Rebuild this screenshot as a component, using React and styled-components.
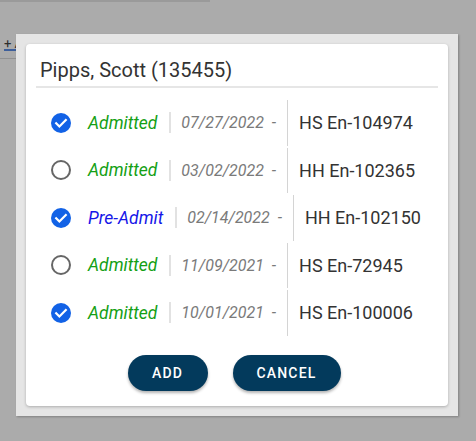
import styled, { createGlobalStyle } from "styled-components";

const GlobalStyle = createGlobalStyle`
  html, body {
    margin: 0;
    padding: 0;
    background: #ffffff;
    font-family: Roboto, "Liberation Sans", Arial, sans-serif;
  }
`;

const Page = styled.div`
  width: 476px;
  height: 441px;
  overflow: hidden;
  position: relative;
  background: #ffffff;
`;

const TopRule = styled.div`
  width: 210px;
  height: 2px;
  background: #e6e6e6;
`;

const AddLink = styled.a`
  display: inline-block;
  margin: 34px 0 0 4px;
  font-size: 13px;
  color: #444;
  text-decoration: underline;
  text-decoration-color: #5c8ee8;
  text-decoration-thickness: 2px;
  white-space: nowrap;
`;

const PageRule = styled.div`
  margin-top: 6px;
  height: 1px;
  width: 300px;
  background: #d8d8d8;
`;

const Backdrop = styled.div`
  position: absolute;
  inset: 0;
  background: rgba(0, 0, 0, 0.33);
`;

const Frame = styled.div`
  position: absolute;
  left: 16px;
  top: 34px;
  width: 442px;
  height: 382px;
  box-sizing: border-box;
  padding: 10px;
  background: #e5e5e5;
  box-shadow: 1px 1px 2px rgba(0, 0, 0, 0.25);
`;

const Card = styled.div`
  height: 100%;
  box-sizing: border-box;
  background: #fff;
  border-radius: 4px;
  box-shadow: 0 1px 3px rgba(0, 0, 0, 0.25);
  padding: 14px 10px 15px;
  display: flex;
  flex-direction: column;
`;

const Title = styled.h2`
  margin: 0;
  padding: 0 4px 4px;
  font-size: 20px;
  font-weight: 400;
  line-height: 24px;
  color: #333;
  border-bottom: 2px solid #e6e6e6;
`;

const List = styled.div`
  margin-top: 11px;
  display: flex;
  flex-direction: column;
`;

const Row = styled.div`
  height: 47.5px;
  display: flex;
  align-items: center;
`;

const Check = styled.span`
  width: 24px;
  height: 24px;
  margin: 0 15px 0 13px;
  display: flex;
  svg {
    width: 24px;
    height: 24px;
  }
`;

const Status = styled.span`
  font-style: italic;
  font-size: 17.5px;
  color: ${(p) => (p.pre ? "#1616e8" : "#14a014")};
  padding-right: 12px;
`;

const DateCell = styled.span`
  font-style: italic;
  font-size: 16px;
  line-height: 21px;
  color: #7a7a7a;
  border-left: 2px solid #e2e2e2;
  padding: 0 11px 0 10px;
`;

const Entity = styled.span`
  align-self: stretch;
  margin: 1px 0;
  display: flex;
  align-items: center;
  padding-left: 11px;
  border-left: 1px solid #d4d4d4;
  font-size: 18px;
  color: #333;
`;

const Actions = styled.div`
  margin-top: auto;
  display: flex;
  justify-content: center;
  gap: 25px;
  padding-right: 6px;
`;

const Button = styled.button`
  height: 36px;
  min-width: ${(p) => p.w}px;
  border: none;
  border-radius: 18px;
  background: #033a5c;
  color: #fff;
  font-family: Roboto, "Liberation Sans", Arial, sans-serif;
  font-size: 14px;
  font-weight: 500;
  letter-spacing: 1.2px;
  box-shadow: 0 2px 3px rgba(0, 0, 0, 0.3);
  cursor: pointer;
`;

const CheckedIcon = () => (
  <svg viewBox="0 0 24 24">
    <circle cx="12" cy="12" r="10" fill="#1262e6" />
    <path
      d="M7.2 12.3l3.2 3.2 6.4-6.4"
      fill="none"
      stroke="#fff"
      strokeWidth="2.2"
      strokeLinecap="square"
    />
  </svg>
);

const EmptyIcon = () => (
  <svg viewBox="0 0 24 24">
    <circle cx="12" cy="12" r="9" fill="none" stroke="#666" strokeWidth="2" />
  </svg>
);

const rows = [
  { on: true, status: "Admitted", date: "07/27/2022", id: "HS En-104974" },
  { on: false, status: "Admitted", date: "03/02/2022", id: "HH En-102365" },
  { on: true, status: "Pre-Admit", date: "02/14/2022", id: "HH En-102150" },
  { on: false, status: "Admitted", date: "11/09/2021", id: "HS En-72945" },
  { on: true, status: "Admitted", date: "10/01/2021", id: "HS En-100006" },
];

export default function App() {
  return (
    <>
      <GlobalStyle />
      <Page>
        <TopRule />
        <AddLink>+ Add Encounter</AddLink>
        <PageRule />
        <Backdrop />
        <Frame>
          <Card>
            <Title>Pipps, Scott (135455)</Title>
            <List>
              {rows.map((r) => (
                <Row key={r.id}>
                  <Check>{r.on ? <CheckedIcon /> : <EmptyIcon />}</Check>
                  <Status pre={r.status === "Pre-Admit"}>{r.status}</Status>
                  <DateCell>{r.date} &nbsp;-</DateCell>
                  <Entity>{r.id}</Entity>
                </Row>
              ))}
            </List>
            <Actions>
              <Button w={80}>ADD</Button>
              <Button w={108}>CANCEL</Button>
            </Actions>
          </Card>
        </Frame>
      </Page>
    </>
  );
}
